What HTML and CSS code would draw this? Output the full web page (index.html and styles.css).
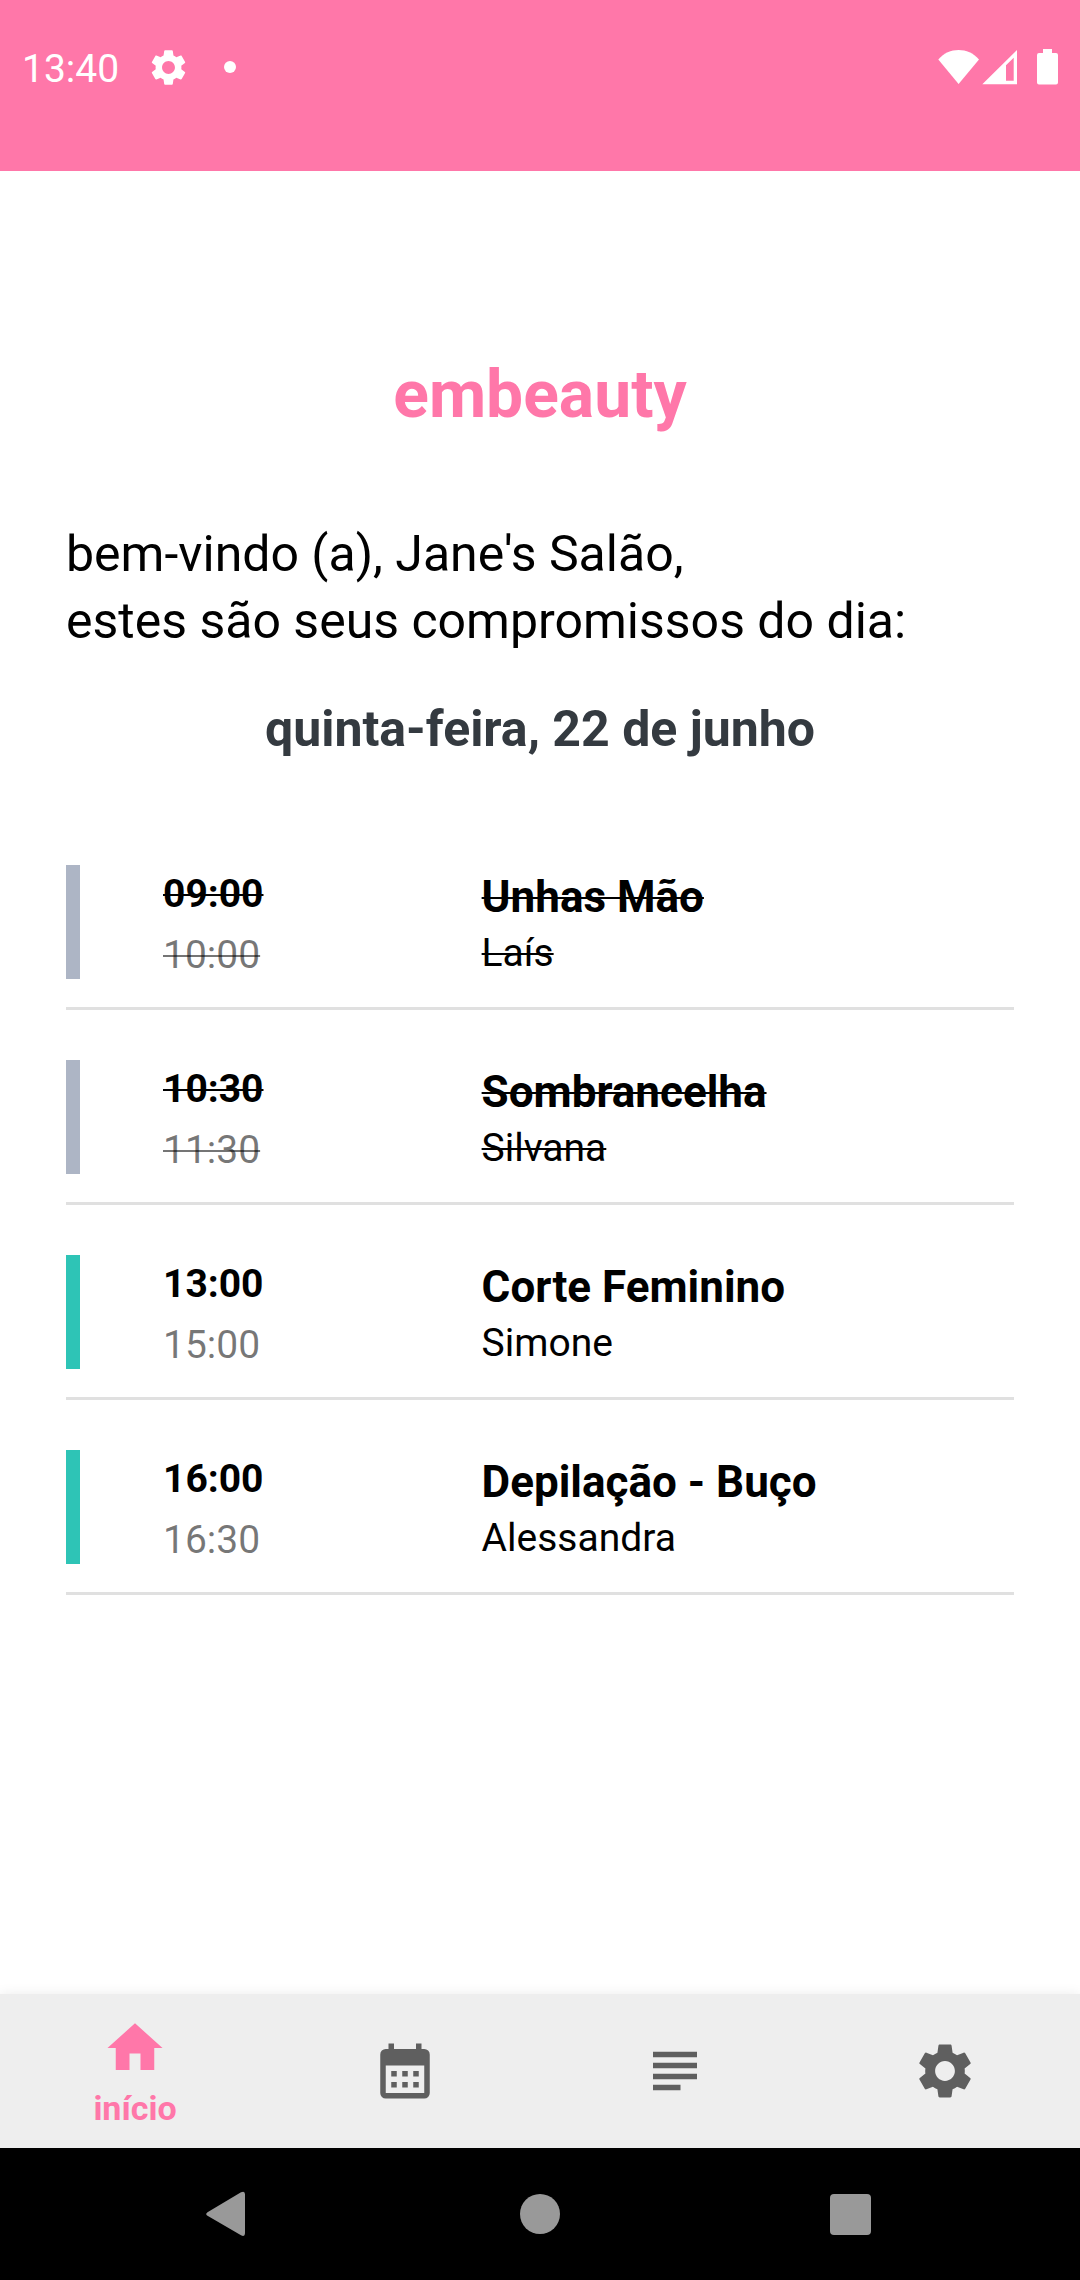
FILE: index.html
```html
<!DOCTYPE html>
<html lang="pt-BR">
<head>
<meta charset="utf-8">
<meta name="viewport" content="width=device-width, initial-scale=1">
<title>embeauty</title>
<link rel="stylesheet" href="styles.css">
</head>
<body>
<svg class="defs" aria-hidden="true">
  <symbol id="cog" viewBox="0 0 24 24">
    <path d="M19.14,12.94c0.04-0.3,0.06-0.61,0.06-0.94c0-0.32-0.02-0.64-0.07-0.94l2.03-1.58c0.18-0.14,0.23-0.41,0.12-0.61l-1.92-3.32c-0.12-0.22-0.37-0.29-0.59-0.22l-2.39,0.96c-0.5-0.38-1.03-0.7-1.62-0.94L14.4,2.81c-0.04-0.24-0.24-0.41-0.48-0.41h-3.84c-0.24,0-0.43,0.17-0.47,0.41L9.25,5.35C8.66,5.59,8.12,5.92,7.63,6.29L5.24,5.33c-0.22-0.08-0.47,0-0.59,0.22L2.74,8.87C2.62,9.08,2.66,9.34,2.86,9.48l2.03,1.58C4.84,11.36,4.8,11.69,4.8,12s0.02,0.64,0.07,0.94l-2.03,1.58c-0.18,0.14-0.23,0.41-0.12,0.61l1.92,3.32c0.12,0.22,0.37,0.29,0.59,0.22l2.39-0.96c0.5,0.38,1.03,0.7,1.62,0.94l0.36,2.54c0.05,0.24,0.24,0.41,0.48,0.41h3.84c0.24,0,0.44-0.17,0.47-0.41l0.36-2.54c0.59-0.24,1.13-0.56,1.62-0.94l2.39,0.96c0.22,0.08,0.47,0,0.59-0.22l1.92-3.32c0.12-0.22,0.07-0.47-0.12-0.61L19.14,12.94z M12,15.6c-1.98,0-3.6-1.62-3.6-3.6s1.62-3.6,3.6-3.6s3.6,1.62,3.6,3.6S13.98,15.6,12,15.6z"/>
  </symbol>
</svg>

<header class="status-bar">
  <div class="status-left">
    <time class="clock">13:40</time>
    <svg class="status-cog" aria-hidden="true"><use href="#cog"/></svg>
    <svg class="status-dot" viewBox="0 0 24 12" aria-hidden="true"><circle cx="12" cy="6" r="6"/></svg>
  </div>
  <div class="status-right">
    <svg class="wifi" viewBox="0 0 42 36" aria-hidden="true"><path d="M0.3 10.4C6 4 13 1 20.6 1S35.2 4 41 10.4L20.6 35z"/></svg>
    <svg class="signal" viewBox="0 0 36 36" aria-hidden="true"><path fill-rule="evenodd" d="M0.3 35.3L35 1v34.3zM24 16.3v15.4h7.7V8.7z"/></svg>
    <svg class="battery" viewBox="0 0 38 36" aria-hidden="true"><path d="M23 0h9v4h4a2 2 0 0 1 2 2v27.500a2 2 0 0 1-2 2H19a2 2 0 0 1-2-2V6a2 2 0 0 1 2-2h4z"/></svg>
  </div>
</header>

<main class="content">
  <h1 class="brand">embeauty</h1>
  <p class="greeting">bem-vindo (a), Jane's Salão,<br>estes são seus compromissos do dia:</p>
  <h2 class="date">quinta-feira, 22 de junho</h2>

  <ul class="agenda">
    <li class="appointment done">
      <span class="marker"></span>
      <div class="times"><time class="start">09:00</time><time class="end">10:00</time></div>
      <div class="details"><span class="service">Unhas Mão</span><span class="client">Laís</span></div>
    </li>
    <li class="appointment done">
      <span class="marker"></span>
      <div class="times"><time class="start">10:30</time><time class="end">11:30</time></div>
      <div class="details"><span class="service">Sombrancelha</span><span class="client">Silvana</span></div>
    </li>
    <li class="appointment">
      <span class="marker"></span>
      <div class="times"><time class="start">13:00</time><time class="end">15:00</time></div>
      <div class="details"><span class="service">Corte Feminino</span><span class="client">Simone</span></div>
    </li>
    <li class="appointment">
      <span class="marker"></span>
      <div class="times"><time class="start">16:00</time><time class="end">16:30</time></div>
      <div class="details"><span class="service">Depilação - Buço</span><span class="client">Alessandra</span></div>
    </li>
  </ul>
</main>

<nav class="tabs">
  <a class="tab active" href="#inicio">
    <svg class="tab-icon" viewBox="0 0 24 24" aria-hidden="true"><path d="M10 20v-6h4v6h5v-8h3L12 3 2 12h3v8z"/></svg>
    <span>início</span>
  </a>
  <a class="tab" href="#agenda" aria-label="agenda">
    <svg class="tab-icon" viewBox="0 0 24 24" aria-hidden="true"><path d="M19 4h-1V2h-2v2H8V2H6v2H5a2 2 0 0 0-2 2v14a2 2 0 0 0 2 2h14a2 2 0 0 0 2-2V6a2 2 0 0 0-2-2zm0 16H5V10h14zM7 12h2v2H7zm4 0h2v2h-2zm4 0h2v2h-2zM7 16h2v2H7zm4 0h2v2h-2zm4 0h2v2h-2z"/></svg>
  </a>
  <a class="tab" href="#lista" aria-label="lista">
    <svg class="tab-icon" viewBox="0 0 24 24" aria-hidden="true"><path d="M4 5h16v2H4zm0 4h16v2H4zm0 4h16v2H4zm0 4h10v2H4z"/></svg>
  </a>
  <a class="tab" href="#ajustes" aria-label="ajustes">
    <svg class="tab-icon" aria-hidden="true"><use href="#cog"/></svg>
  </a>
</nav>

<footer class="system-bar">
  <button class="system-button" type="button" aria-label="voltar">
    <svg viewBox="0 0 48 48" aria-hidden="true"><path d="M4.500 22.200L38 2.300q4-1.800 4 2v39q0 3.800-4 2L4.500 25.800q-2.600-1.800 0-3.600z"/></svg>
  </button>
  <button class="system-button" type="button" aria-label="tela inicial">
    <svg viewBox="0 0 48 48" aria-hidden="true"><circle cx="24" cy="24" r="20"/></svg>
  </button>
  <button class="system-button" type="button" aria-label="recentes">
    <svg viewBox="0 0 48 48" aria-hidden="true"><rect x="1" y="4" width="41" height="41" rx="4"/></svg>
  </button>
</footer>
</body>
</html>
```
FILE: styles.css
```css
* {
  box-sizing: border-box;
}

body {
  margin: 0;
  min-height: 100vh;
  display: flex;
  flex-direction: column;
  background: #fff;
  color: #000;
  font-family: Roboto, "Liberation Sans", sans-serif;
  font-size: 39px;
  line-height: 46px;
}

svg {
  display: block;
  fill: currentColor;
}

.defs {
  position: absolute;
  width: 0;
  height: 0;
}

/* status bar */
.status-bar {
  display: flex;
  justify-content: space-between;
  align-items: flex-start;
  padding: 46px 22px 83px;
  background: #ff77a9;
  color: #fff;
}

.status-left,
.status-right {
  display: flex;
  align-items: center;
  height: 42px;
}

.status-left {
  gap: 28px;
}

.status-right {
  gap: 2px;
}

.clock {
  padding-top: 4px;
}

.status-cog {
  width: 43px;
  height: 43px;
}

.status-dot {
  width: 24px;
  height: 12px;
}

.wifi {
  width: 42px;
  height: 36px;
}

.signal {
  width: 36px;
  height: 36px;
}

.battery {
  width: 38px;
  height: 36px;
}

/* content */
.content {
  flex: 1;
  padding: 185px 66px 66px;
}

.brand {
  margin: 0 0 87px;
  color: #ff77a9;
  font-size: 66px;
  line-height: 78px;
  text-align: center;
}

.greeting {
  margin: 0 0 45px;
  font-size: 50px;
  line-height: 67px;
}

.date {
  margin: 0 0 57px;
  color: #343a40;
  font-size: 50px;
  line-height: 58px;
  text-align: center;
}

.agenda {
  margin: 0;
  padding: 0;
  list-style: none;
}

.appointment {
  display: grid;
  grid-template-columns: 14px 43fr 57fr;
  padding: 50px 0 28px;
  border-bottom: 3px solid #e0e0e0;
}

.marker {
  min-height: 114px;
  background: #2ec4b6;
}

.times,
.details {
  display: flex;
  flex-direction: column;
  align-items: flex-start;
  padding-top: 6px;
}

.times {
  gap: 15px;
  padding-left: 83px;
}

.details {
  gap: 7px;
}

.start {
  font-weight: 700;
}

.end {
  color: rgba(0, 0, 0, 0.54);
}

.service {
  font-size: 44px;
  font-weight: 700;
  line-height: 52px;
}

.done .marker {
  background: #adb5c5;
}

.done .start,
.done .end,
.done .service,
.done .client {
  text-decoration: line-through;
  text-decoration-thickness: 2px;
}

/* bottom navigation */
.tabs {
  display: grid;
  grid-template-columns: repeat(4, 1fr);
  min-height: 154px;
  background: #eee;
  box-shadow: 0 0 12px rgba(0, 0, 0, 0.08);
}

.tab {
  display: flex;
  flex-direction: column;
  align-items: center;
  justify-content: center;
  gap: 8px;
  color: #5f5f5f;
  font-size: 34px;
  font-weight: 700;
  line-height: 38px;
  text-decoration: none;
}

.tab.active {
  color: #ff77a9;
}

.tab-icon {
  width: 66px;
  height: 66px;
}

/* system navigation */
.system-bar {
  display: grid;
  grid-template-columns: repeat(3, 1fr);
  min-height: 132px;
  padding: 0 70px;
  background: #000;
}

.system-button {
  display: flex;
  align-items: center;
  justify-content: center;
  padding: 0;
  border: 0;
  background: none;
  color: #999;
}

.system-button svg {
  width: 48px;
  height: 48px;
}
```
